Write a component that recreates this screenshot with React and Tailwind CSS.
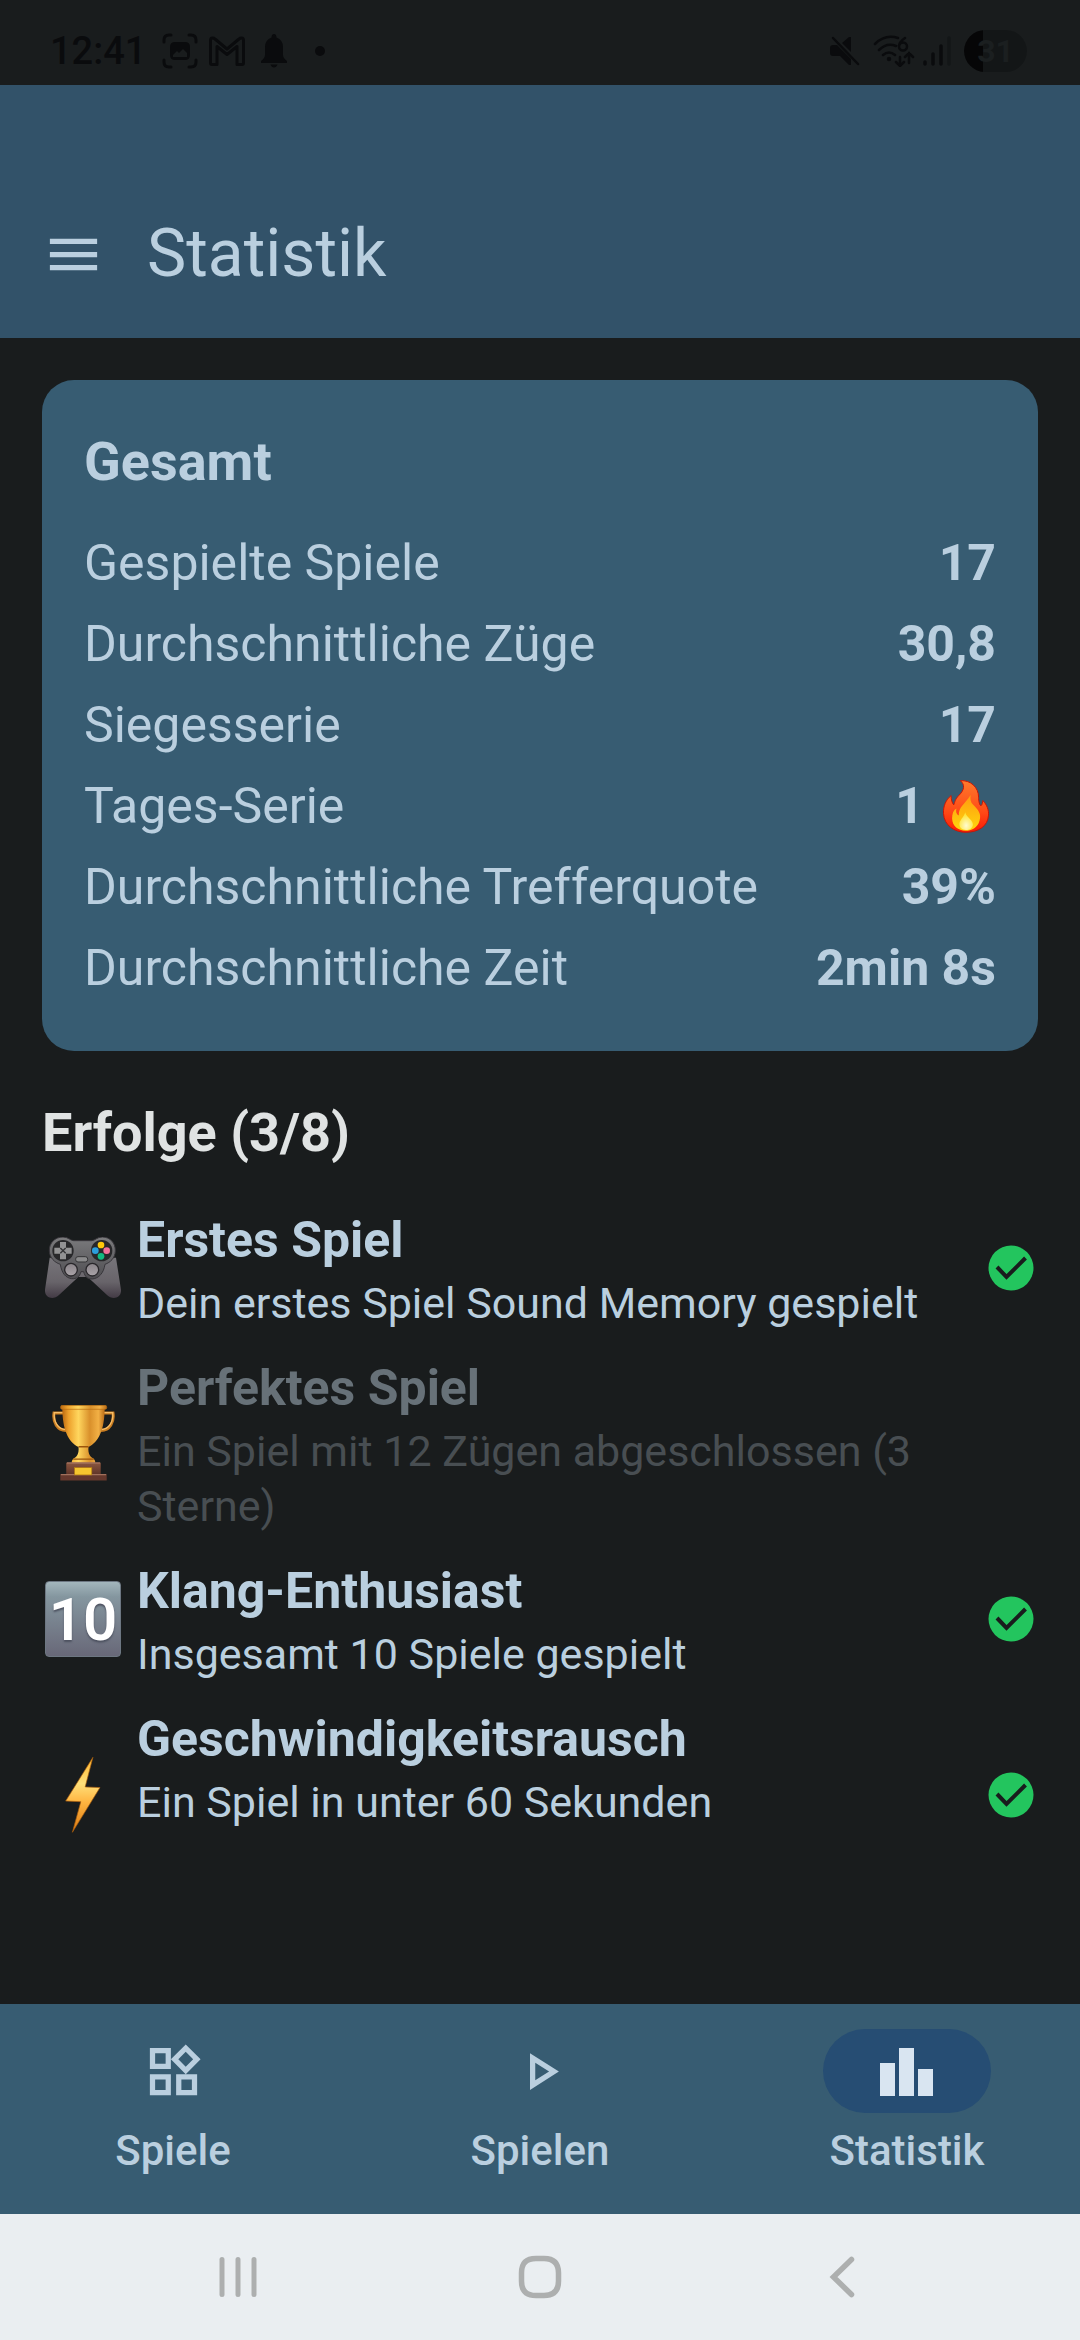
import { useState } from "react";
import { MdMenu, MdOutlinePlayArrow, MdOutlineWidgets } from "react-icons/md";

const FireEmoji = () => (
  <svg viewBox="0 0 140 160" className="h-[53px] w-[60px]" role="img" aria-label="Feuer">
    <defs>
      <linearGradient id="fireOuter" x1="0" y1="0" x2="0" y2="1">
        <stop offset="0" stopColor="#ff7a2c" />
        <stop offset="0.6" stopColor="#ff4a17" />
        <stop offset="1" stopColor="#fb1a05" />
      </linearGradient>
      <linearGradient id="fireInner" x1="0" y1="0" x2="0" y2="1">
        <stop offset="0" stopColor="#ff9a10" />
        <stop offset="1" stopColor="#ffd60c" />
      </linearGradient>
      <radialGradient id="fireCore" cx="0.5" cy="0.75" r="0.6">
        <stop offset="0" stopColor="#fffbd0" />
        <stop offset="1" stopColor="#ffe43a" />
      </radialGradient>
    </defs>
    <path d="M53 2C84 0 108 22 108 52C108 64 111 76 115 78C120 75 119 67 121 62C134 76 139 91 138 106C136 140 108 157 71 158C33 158 4 136 2 101C1 79 9 60 25 47C25 59 28 70 33 75C37 66 36 59 49 46C66 29 67 14 53 2Z" fill="url(#fireOuter)" stroke="#c81505" strokeWidth="3" />
    <path d="M84 45C82 57 84 67 91 74C108 91 117 103 111 122C105 145 86 153 69 153C46 152 29 140 28 116C28 102 32 91 41 86C39 95 40 103 48 107C48 80 64 76 84 45Z" fill="url(#fireInner)" />
    <path d="M68 97C67 108 91 119 91 134C90 146 80 151 70 151C58 151 50 144 50 133C50 121 62 114 68 97Z" fill="url(#fireCore)" />
  </svg>
);

const GamepadEmoji = () => (
  <svg viewBox="0 0 228 184" className="w-[76px]" aria-hidden="true">
    <defs>
      <linearGradient id="padGrip" x1="0" y1="0" x2="0" y2="1">
        <stop offset="0" stopColor="#77757a" />
        <stop offset="0.6" stopColor="#68646a" />
        <stop offset="1" stopColor="#433b45" />
      </linearGradient>
      <linearGradient id="padTop" x1="0" y1="0" x2="0" y2="1">
        <stop offset="0" stopColor="#7b7b7d" />
        <stop offset="1" stopColor="#4e4d51" />
      </linearGradient>
      <linearGradient id="padStick" x1="0" y1="0" x2="0" y2="1">
        <stop offset="0" stopColor="#8a8489" />
        <stop offset="1" stopColor="#a9a3a8" />
      </linearGradient>
    </defs>
    <path d="M14 62L0 158C-2 184 26 190 42 174L100 120H128L186 174C202 190 230 184 228 158L213 62Z" fill="url(#padGrip)" />
    <path d="M54 0C70 0 76 11 86 11H140C150 11 156 0 172 0C195 0 212 18 211 42C210 64 196 76 180 82C176 108 162 124 142 126C128 126 120 120 116 104H108C104 120 94 126 80 125C62 123 50 108 46 82C28 76 14 62 13 42C12 18 30 0 54 0Z" fill="url(#padTop)" stroke="#37353a" strokeWidth="3" />
    <circle cx="54" cy="41" r="32" fill="#28282a" />
    <circle cx="170" cy="41" r="32" fill="#28282a" />
    <path d="M45 15H63V32H80V50H63V67H45V50H28V32H45Z" fill="#929293" />
    <path d="M46 33L62 49M62 33L46 49" stroke="#343436" strokeWidth="4" />
    <circle cx="168" cy="24" r="10" fill="#ffc80a" />
    <circle cx="151" cy="41" r="10" fill="#2c9fdd" />
    <circle cx="185" cy="41" r="10" fill="#f3709a" />
    <circle cx="168" cy="58" r="10" fill="#12b981" />
    <rect x="92" y="59" width="36" height="16" rx="7" fill="#8b8b8c" stroke="#343436" strokeWidth="3" />
    <circle cx="78" cy="98" r="19" fill="url(#padStick)" stroke="#29272b" strokeWidth="4" />
    <circle cx="142" cy="98" r="19" fill="url(#padStick)" stroke="#29272b" strokeWidth="4" />
  </svg>
);

const TrophyEmoji = () => (
  <svg viewBox="0 0 190 230" className="w-[63px]" aria-hidden="true">
    <defs>
      <linearGradient id="cupGold" x1="0" y1="0" x2="1" y2="0">
        <stop offset="0" stopColor="#bb6a12" />
        <stop offset="0.15" stopColor="#eda12c" />
        <stop offset="0.38" stopColor="#ffd65e" />
        <stop offset="0.65" stopColor="#d9902b" />
        <stop offset="0.85" stopColor="#f2b045" />
        <stop offset="1" stopColor="#b96b17" />
      </linearGradient>
      <linearGradient id="cupBase" x1="0" y1="0" x2="0" y2="1">
        <stop offset="0" stopColor="#8a5640" />
        <stop offset="1" stopColor="#5d3227" />
      </linearGradient>
    </defs>
    <path d="M35 24H6C2 52 16 76 42 77M154 24H184C188 52 174 76 148 77" fill="none" stroke="#c97c20" strokeWidth="9" />
    <path d="M34 23H7C4 50 18 73 41 74M155 23H183C186 50 172 73 149 74" fill="none" stroke="#f6bd67" strokeWidth="4" />
    <path d="M31 10H159C158 75 142 110 110 127C108 150 116 157 126 162C134 172 130 178 122 178H68C60 178 56 172 64 162C74 157 82 150 80 127C48 110 32 75 31 10Z" fill="url(#cupGold)" />
    <rect x="26" y="1" width="139" height="12" rx="5" fill="url(#cupGold)" stroke="#b86a0e" strokeWidth="2" />
    <path d="M80 126H110M64 163H126" stroke="#9b540c" strokeWidth="4" />
    <path d="M43 174H147V212H43Z" fill="url(#cupBase)" />
    <path d="M25 208H165V228H25Z" fill="#65382d" />
    <path d="M27 210H163M45 175H145" stroke="#a1705c" strokeWidth="4" />
    <rect x="68" y="189" width="52" height="22" fill="#f5c62f" stroke="#b17a12" strokeWidth="2" />
  </svg>
);

const TenEmoji = () => (
  <div className="size-[76px] rounded-[4px] border border-[#6d7782] bg-linear-to-b from-[#a3b6bc] via-[#84969f] via-20% to-[#686878] text-center text-[60px] leading-[76px] font-semibold text-white text-shadow-[0_2px_2px_#4d5260]">
    10
  </div>
);

const BoltEmoji = () => (
  <svg viewBox="0 0 106 226" className="h-[76px]" aria-hidden="true">
    <defs>
      <linearGradient id="bolt" x1="0" y1="0" x2="0" y2="1">
        <stop offset="0" stopColor="#ffb62e" />
        <stop offset="0.35" stopColor="#ffe07a" />
        <stop offset="0.6" stopColor="#ffb440" />
        <stop offset="1" stopColor="#dc7a12" />
      </linearGradient>
    </defs>
    <path d="M83 1L2 131L47 133L22 224L104 91L60 89Z" fill="url(#bolt)" stroke="#a85c0e" strokeWidth="2" />
  </svg>
);

const STATS = [
  { label: "Gespielte Spiele", value: "17" },
  { label: "Durchschnittliche Züge", value: "30,8" },
  { label: "Siegesserie", value: "17" },
  { label: "Tages-Serie", value: "1", emoji: <FireEmoji /> },
  { label: "Durchschnittliche Trefferquote", value: "39%" },
  { label: "Durchschnittliche Zeit", value: "2min 8s" },
];

const ACHIEVEMENTS = [
  { title: "Erstes Spiel", text: "Dein erstes Spiel Sound Memory gespielt", icon: <GamepadEmoji />, done: true },
  { title: "Perfektes Spiel", text: "Ein Spiel mit 12 Zügen abgeschlossen (3 Sterne)", icon: <TrophyEmoji />, done: false },
  { title: "Klang-Enthusiast", text: "Insgesamt 10 Spiele gespielt", icon: <TenEmoji />, done: true },
  { title: "Geschwindigkeitsrausch", text: "Ein Spiel in unter 60 Sekunden", icon: <BoltEmoji />, done: true, tall: true },
];

const StatistikIcon = () => (
  <svg viewBox="0 0 63 63" className="size-[63px]" fill="currentColor" aria-hidden="true">
    <path d="M4 23h15v33H4zM23 8h15v48H23zM42 29h15v27H42z" />
  </svg>
);

const TABS = [
  { id: "spiele", label: "Spiele", icon: <MdOutlineWidgets className="size-[63px]" /> },
  { id: "spielen", label: "Spielen", icon: <MdOutlinePlayArrow className="size-[63px]" /> },
  { id: "statistik", label: "Statistik", icon: <StatistikIcon /> },
];

function StatusBar() {
  return (
    <div className="flex h-[85px] items-center justify-between pt-4 pr-[53px] pl-[50px] text-[#0a0b0d]">
      <div className="flex items-center">
        <span className="text-[38px] leading-[40px] font-medium">12:41</span>
        <svg viewBox="0 0 36 36" className="ml-4 size-9" fill="none" stroke="currentColor" strokeWidth="3" strokeLinecap="round" aria-hidden="true">
          <path d="M2 9V7q0-5 5-5h2M27 2h2q5 0 5 5v2M34 27v2q0 5-5 5h-2M9 34H7q-5 0-5-5v-2" />
          <path fillRule="evenodd" fill="currentColor" stroke="none" d="M13 9h10q5 0 5 5v8q0 5-5 5H13q-5 0-5-5v-8q0-5 5-5zM11 22v2h14v-4l-4-4-4 4-2-2z" />
        </svg>
        <svg viewBox="0 0 36 30" className="ml-[11px] h-[30px] w-9" fill="none" stroke="currentColor" strokeWidth="3" strokeLinejoin="round" aria-hidden="true">
          <path d="M3.500 2Q1.500 2 1.500 4.500V27q0 1.500 1.500 1.500H8V10.500l10 8 10-8v18h5q1.500 0 1.500-1.500V4.500Q34.500 2 32.500 2 31 2 30 3L18 13 6 3Q5 2 3.500 2z" />
        </svg>
        <svg viewBox="0 0 26 34" className="ml-4 h-[34px] w-[26px]" fill="currentColor" aria-hidden="true">
          <path d="M13 0q2.500 0 2.500 3.500Q22 6 22 13v8q0 3 4 6v2H0v-2q4-3 4-6v-8q0-7 6.500-9.500Q10.500 0 13 0zM9.500 30.500h7q-1 3-3.500 3t-3.500-3z" />
        </svg>
        <span className="ml-7 size-[10px] rounded-full bg-[#0a0b0d]" />
      </div>
      <div className="flex items-center">
        <svg viewBox="0 0 30 30" className="size-[30px]" fill="currentColor" aria-hidden="true">
          <path d="M0 12q0-3 3-3h4l14 14v6h-2l-9-9H3q-3 0-3-3zM12 7l7-6h2v15z" />
          <path d="M3 2l25 26" stroke="currentColor" strokeWidth="2.500" strokeLinecap="round" />
        </svg>
        <svg viewBox="0 0 42 32" className="ml-[13px] h-8 w-[42px]" fill="none" stroke="currentColor" strokeWidth="2.500" strokeLinecap="round" aria-hidden="true">
          <path d="M2 9Q12-1 25 3M6 15q8-8 17-4M10 20q6-5 12 0" />
          <path d="M32 3q-6 4-6 8.500a4 4 0 1 0 4-4q-3 0-4 3M27 22v9m-4-4l4 4 4-4M36 28v-10m-4 4l4-4 4 4" />
          <circle cx="16" cy="24" r="1" fill="currentColor" />
        </svg>
        <svg viewBox="0 0 29 30" className="ml-2 h-[30px] w-[29px]" strokeWidth="3.500" stroke="currentColor" strokeLinecap="round" aria-hidden="true">
          <path d="M2 26v2M10 18v10M18 10v18" />
          <path d="M26 2v26" stroke="#131617" />
        </svg>
        <span className="ml-3 flex h-[42px] w-[63px] items-center justify-center rounded-full bg-linear-to-r from-[#060607] from-30% to-[#131617] to-30% text-[32px] leading-none font-bold text-[#1b1f20]">31</span>
      </div>
    </div>
  );
}

function CheckBadge() {
  return (
    <svg viewBox="0 0 54 54" className="size-[54px] shrink-0" role="img" aria-label="Erreicht">
      <circle cx="27" cy="27" r="22.500" fill="#23c55e" />
      <path d="M13 26l9.500 10L41.500 17" fill="none" stroke="#191c1d" strokeWidth="4" />
    </svg>
  );
}

function Achievement({ title, text, icon, done, tall }) {
  return (
    <li className="flex items-center py-[11px]">
      <div className="mr-[13px] flex w-[82px] shrink-0 justify-center">{icon}</div>
      <div className="flex-1">
        <h3 className={`text-[50px] leading-[71px] font-bold ${done ? "text-[#bacfdf]" : "text-[#677178]"}`}>{title}</h3>
        <p className={`text-[43px] leading-[55px] ${done ? "text-[#bacfdf]" : "text-[#484e52]"} ${tall ? "min-h-[110px]" : ""}`}>{text}</p>
      </div>
      {done ? <CheckBadge /> : <span className="w-[54px] shrink-0" />}
    </li>
  );
}

export default function App() {
  const [tab, setTab] = useState("statistik");

  return (
    <div className="flex min-h-screen flex-col bg-[#191c1d] font-[Roboto,sans-serif] text-[#bacfdf]">
      <StatusBar />

      <header className="flex items-center gap-[42px] bg-[#325269] px-[42px] pt-[85px]">
        <button type="button" aria-label="Menü">
          <MdMenu className="size-[63px]" />
        </button>
        <h1 className="text-[66px] leading-[168px]">Statistik</h1>
      </header>

      <main className="flex-1 px-[42px] pt-[42px]">
        <section className="rounded-[32px] bg-[#375c72] p-[42px]">
          <h2 className="mb-[21px] text-[54px] leading-[80px] font-bold">Gesamt</h2>
          <dl>
            {STATS.map((s) => (
              <div key={s.label} className="flex justify-between text-[50px] leading-[81px]">
                <dt>{s.label}</dt>
                <dd className="flex items-center gap-3 font-bold">{s.value}{s.emoji}</dd>
              </div>
            ))}
          </dl>
        </section>

        <h2 className="mt-[42px] mb-[21px] text-[54px] leading-[80px] font-bold text-[#e0e3e3]">Erfolge (3/8)</h2>
        <ul>
          {ACHIEVEMENTS.map((a) => <Achievement key={a.title} {...a} />)}
        </ul>
      </main>

      <nav className="grid grid-cols-3 gap-[21px] bg-[#375c72] pt-[25px] pb-9">
        {TABS.map((t) => (
          <button key={t.id} type="button" onClick={() => setTab(t.id)} className="flex flex-col items-center gap-[10px]">
            <span className={`flex h-[84px] w-[168px] items-center justify-center rounded-full ${tab === t.id ? "bg-[#264d73] text-[#d9e5f1]" : ""}`}>{t.icon}</span>
            <span className="text-[42px] leading-[55px] font-medium">{t.label}</span>
          </button>
        ))}
      </nav>

      <div className="grid h-[126px] grid-cols-3 items-center bg-[#eaeef1] px-[87px] text-[#adafaf]">
        <button type="button" aria-label="Letzte Apps" className="flex justify-center">
          <svg viewBox="0 0 42 42" className="size-[42px]" stroke="currentColor" strokeWidth="5" strokeLinecap="round">
            <path d="M5 3.500v35M21 3.500v35M37 3.500v35" />
          </svg>
        </button>
        <button type="button" aria-label="Startbildschirm" className="flex justify-center">
          <svg viewBox="0 0 44 44" className="size-11" fill="none" stroke="currentColor" strokeWidth="5.500">
            <path d="M22 3.500H26Q40.500 3.500 40.500 18V26Q40.500 40.500 26 40.500H18Q3.500 40.500 3.500 26V18Q3.500 3.500 18 3.500Z" />
          </svg>
        </button>
        <button type="button" aria-label="Zurück" className="flex justify-center">
          <svg viewBox="0 0 26 42" className="h-[42px] w-[26px]" fill="none" stroke="currentColor" strokeWidth="5.500" strokeLinecap="round">
            <path d="M22.500 3.500L4.500 21L22.500 38.500" />
          </svg>
        </button>
      </div>
    </div>
  );
}
